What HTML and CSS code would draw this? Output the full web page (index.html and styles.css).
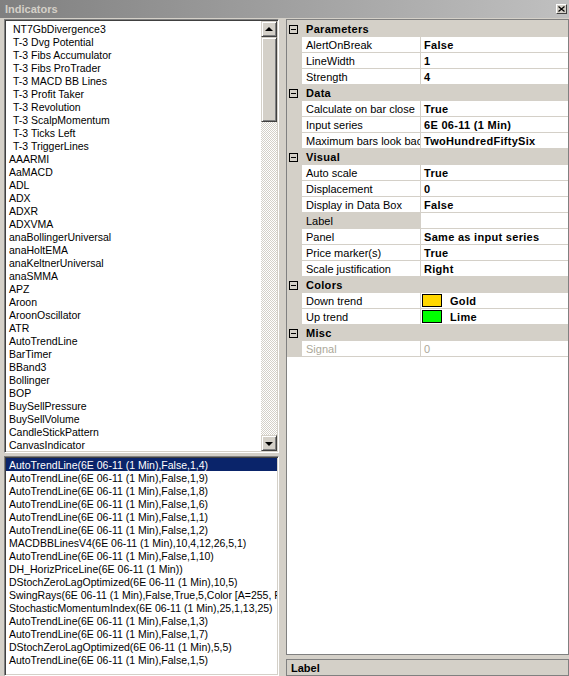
FILE: index.html
```html
<!DOCTYPE html>
<html>
<head>
<meta charset="utf-8">
<title>Indicators</title>
<link rel="stylesheet" href="styles.css">
</head>
<body>
<div class="titlebar">
  <span class="title">Indicators</span>
  <span class="close"><svg width="7" height="6" viewBox="0 0 7 6"><path d="M0.5 0.5 L6.5 5.5 M6.5 0.5 L0.5 5.5" stroke="#000" stroke-width="1.2" fill="none"/></svg></span>
</div>
<div class="main">
  <div class="leftcol">
    <div class="listbox upper">
      <div class="items">
        <div class="item ind">NT7GbDivergence3</div>
        <div class="item ind">T-3 Dvg Potential</div>
        <div class="item ind">T-3 Fibs Accumulator</div>
        <div class="item ind">T-3 Fibs ProTrader</div>
        <div class="item ind">T-3 MACD BB Lines</div>
        <div class="item ind">T-3 Profit Taker</div>
        <div class="item ind">T-3 Revolution</div>
        <div class="item ind">T-3 ScalpMomentum</div>
        <div class="item ind">T-3 Ticks Left</div>
        <div class="item ind">T-3 TriggerLines</div>
        <div class="item">AAARMI</div>
        <div class="item">AaMACD</div>
        <div class="item">ADL</div>
        <div class="item">ADX</div>
        <div class="item">ADXR</div>
        <div class="item">ADXVMA</div>
        <div class="item">anaBollingerUniversal</div>
        <div class="item">anaHoltEMA</div>
        <div class="item">anaKeltnerUniversal</div>
        <div class="item">anaSMMA</div>
        <div class="item">APZ</div>
        <div class="item">Aroon</div>
        <div class="item">AroonOscillator</div>
        <div class="item">ATR</div>
        <div class="item">AutoTrendLine</div>
        <div class="item">BarTimer</div>
        <div class="item">BBand3</div>
        <div class="item">Bollinger</div>
        <div class="item">BOP</div>
        <div class="item">BuySellPressure</div>
        <div class="item">BuySellVolume</div>
        <div class="item">CandleStickPattern</div>
        <div class="item">CanvasIndicator</div>
      </div>
      <div class="vscroll">
        <div class="sbtn"><span class="arrow up"></span></div>
        <div class="thumb"></div>
        <div class="track"></div>
        <div class="sbtn"><span class="arrow down"></span></div>
      </div>
    </div>
    <div class="listbox lower">
      <div class="items">
        <div class="item sel">AutoTrendLine(6E 06-11 (1 Min),False,1,4)</div>
        <div class="item">AutoTrendLine(6E 06-11 (1 Min),False,1,9)</div>
        <div class="item">AutoTrendLine(6E 06-11 (1 Min),False,1,8)</div>
        <div class="item">AutoTrendLine(6E 06-11 (1 Min),False,1,6)</div>
        <div class="item">AutoTrendLine(6E 06-11 (1 Min),False,1,1)</div>
        <div class="item">AutoTrendLine(6E 06-11 (1 Min),False,1,2)</div>
        <div class="item">MACDBBLinesV4(6E 06-11 (1 Min),10,4,12,26,5,1)</div>
        <div class="item">AutoTrendLine(6E 06-11 (1 Min),False,1,10)</div>
        <div class="item">DH_HorizPriceLine(6E 06-11 (1 Min))</div>
        <div class="item">DStochZeroLagOptimized(6E 06-11 (1 Min),10,5)</div>
        <div class="item">SwingRays(6E 06-11 (1 Min),False,True,5,Color [A=255, R=0, G=0, B=255])</div>
        <div class="item">StochasticMomentumIndex(6E 06-11 (1 Min),25,1,13,25)</div>
        <div class="item">AutoTrendLine(6E 06-11 (1 Min),False,1,3)</div>
        <div class="item">AutoTrendLine(6E 06-11 (1 Min),False,1,7)</div>
        <div class="item">DStochZeroLagOptimized(6E 06-11 (1 Min),5,5)</div>
        <div class="item">AutoTrendLine(6E 06-11 (1 Min),False,1,5)</div>
      </div>
    </div>
  </div>
  <div class="rightcol">
    <div class="pgrid">
      <div class="prow head"><span class="tog"></span><span class="htext">Parameters</span></div>
      <div class="prow"><span class="strip"></span><span class="name">AlertOnBreak</span><span class="val">False</span></div>
      <div class="prow"><span class="strip"></span><span class="name">LineWidth</span><span class="val">1</span></div>
      <div class="prow"><span class="strip"></span><span class="name">Strength</span><span class="val">4</span></div>
      <div class="prow head"><span class="tog"></span><span class="htext">Data</span></div>
      <div class="prow"><span class="strip"></span><span class="name">Calculate on bar close</span><span class="val">True</span></div>
      <div class="prow"><span class="strip"></span><span class="name">Input series</span><span class="val">6E 06-11 (1 Min)</span></div>
      <div class="prow"><span class="strip"></span><span class="name">Maximum bars look back</span><span class="val">TwoHundredFiftySix</span></div>
      <div class="prow head"><span class="tog"></span><span class="htext">Visual</span></div>
      <div class="prow"><span class="strip"></span><span class="name">Auto scale</span><span class="val">True</span></div>
      <div class="prow"><span class="strip"></span><span class="name">Displacement</span><span class="val">0</span></div>
      <div class="prow"><span class="strip"></span><span class="name">Display in Data Box</span><span class="val">False</span></div>
      <div class="prow"><span class="strip"></span><span class="name selname">Label</span><span class="val"></span></div>
      <div class="prow"><span class="strip"></span><span class="name">Panel</span><span class="val">Same as input series</span></div>
      <div class="prow"><span class="strip"></span><span class="name">Price marker(s)</span><span class="val">True</span></div>
      <div class="prow"><span class="strip"></span><span class="name">Scale justification</span><span class="val">Right</span></div>
      <div class="prow head"><span class="tog"></span><span class="htext">Colors</span></div>
      <div class="prow"><span class="strip"></span><span class="name">Down trend</span><span class="val colorval"><span class="swatch gold"></span><span class="ctext">Gold</span></span></div>
      <div class="prow"><span class="strip"></span><span class="name">Up trend</span><span class="val colorval"><span class="swatch lime"></span><span class="ctext">Lime</span></span></div>
      <div class="prow head"><span class="tog"></span><span class="htext">Misc</span></div>
      <div class="prow disabled"><span class="strip"></span><span class="name">Signal</span><span class="val">0</span></div>
    </div>
    <div class="help">
      <div class="helptitle">Label</div>
    </div>
  </div>
</div>
</body>
</html>
```

FILE: styles.css
```css
* { box-sizing: border-box; }
html, body { margin: 0; padding: 0; }
body {
  width: 569px;
  height: 676px;
  overflow: hidden;
  background: #d4d0c8;
  font-family: "Liberation Sans", Arial, sans-serif;
  color: #000;
}

.titlebar {
  height: 18px;
  background: linear-gradient(to right, #808080, #c0c0c0);
  display: flex;
  align-items: center;
  justify-content: space-between;
  padding: 0 2px 0 5px;
}
.title {
  color: #d4d0c8;
  font-weight: bold;
  font-size: 11px;
  line-height: 18px;
}
.close {
  width: 11px;
  height: 10px;
  background: #d4d0c8;
  border: 1px solid;
  border-color: #fff #404040 #404040 #fff;
  display: flex;
  align-items: center;
  justify-content: center;
}

.main {
  display: flex;
  gap: 7px;
  padding: 1px 0 0 4px;
  height: 658px;
}

.leftcol {
  width: 275px;
  display: flex;
  flex-direction: column;
  gap: 3px;
}

.listbox {
  background: #fff;
  border: 1px solid;
  border-color: #808080 #fff #fff #808080;
  box-shadow: inset 1px 1px #404040, inset -1px -1px #d4d0c8;
  padding: 1px;
  display: flex;
  overflow: hidden;
}
.upper { height: 434px; }
.lower { flex: 1; }

.items {
  flex: 1;
  overflow: hidden;
  padding-top: 1px;
  font-size: 10.5px;
}
.lower .items { padding-top: 0; }

.item {
  height: 13px;
  line-height: 13px;
  padding: 1px 0 0 3px;
  white-space: nowrap;
}
.item.ind { padding-left: 7px; }
.item.sel { background: #0a246a; color: #fff; }

.vscroll {
  width: 16px;
  display: flex;
  flex-direction: column;
}
.sbtn, .thumb {
  background: #d4d0c8;
  border: 1px solid;
  border-color: #d4d0c8 #404040 #404040 #d4d0c8;
  box-shadow: inset 1px 1px #fff, inset -1px -1px #808080;
}
.sbtn {
  height: 16px;
  display: flex;
  align-items: center;
  justify-content: center;
}
.thumb { height: 85px; }
.track {
  flex: 1;
  background-color: #fff;
  background-image: repeating-conic-gradient(#d4d0c8 0 25%, #fff 0 50%);
  background-size: 2px 2px;
}
.arrow {
  width: 0;
  height: 0;
  border-left: 4px solid transparent;
  border-right: 4px solid transparent;
}
.arrow.up { border-bottom: 4px solid #000; margin-top: -1px; }
.arrow.down { border-top: 4px solid #000; margin-top: 1px; }

.rightcol {
  width: 285px;
  display: flex;
  flex-direction: column;
}

.pgrid {
  height: 642px;
  border: 1px solid #808080;
  padding-top: 1px;
  background: linear-gradient(#d4d0c8 1px, #fff 1px);
  font-size: 11px;
}

.prow {
  height: 16px;
  display: flex;
  border-bottom: 1px solid #d4d0c8;
  white-space: nowrap;
}
.prow.head {
  background: #d4d0c8;
  align-items: flex-start;
}
.tog {
  width: 9px;
  height: 9px;
  margin: 4px 0 0 2px;
  border: 1px solid #000;
  position: relative;
}
.tog::after {
  content: "";
  position: absolute;
  left: 1px;
  top: 3px;
  width: 5px;
  height: 1px;
  background: #000;
}
.htext {
  font-weight: bold;
  letter-spacing: 0.3px;
  line-height: 13px;
  padding: 2px 0 0 8px;
}

.strip {
  width: 15px;
  background: #d4d0c8;
}
.name {
  width: 119px;
  border-right: 1px solid #d4d0c8;
  padding: 2px 0 0 4px;
  line-height: 13px;
  overflow: hidden;
}
.name.selname { background: #d4d0c8; }
.val {
  flex: 1;
  padding: 2px 0 0 3px;
  line-height: 13px;
  font-weight: bold;
  letter-spacing: 0.3px;
  overflow: hidden;
}
.disabled .name, .disabled .val {
  color: #aca899;
  font-weight: normal;
  letter-spacing: 0;
}

.colorval {
  display: flex;
  align-items: flex-start;
  padding: 0;
}
.swatch {
  width: 20px;
  height: 13px;
  margin: 1px 0 0 1px;
  border: 1px solid #000;
}
.swatch.gold { background: #ffd700; }
.swatch.lime { background: #00ff00; }
.ctext {
  padding: 2px 0 0 8px;
  line-height: 13px;
}

.help {
  margin-top: 4px;
  flex: 1;
  border: 1px solid #808080;
  padding: 2px 0 0 4px;
}
.helptitle {
  font-size: 11px;
  font-weight: bold;
  line-height: 13px;
}
```
